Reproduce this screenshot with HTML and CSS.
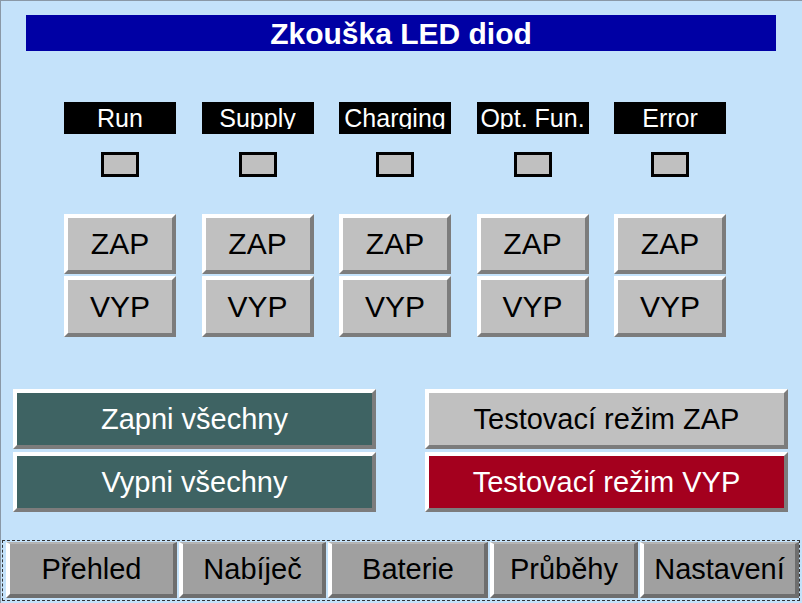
FILE: index.html
```html
<!DOCTYPE html>
<html lang="cs">
<head>
<meta charset="utf-8">
<title>Zkouška LED diod</title>
<link rel="stylesheet" href="styles.css">
</head>
<body>
<div class="screen">
  <div class="title">Zkouška LED diod</div>

  <div class="grid labels">
    <div class="label"><span>Run</span></div>
    <div class="label"><span>Supply</span></div>
    <div class="label"><span>Charging</span></div>
    <div class="label"><span>Opt. Fun.</span></div>
    <div class="label"><span>Error</span></div>
  </div>

  <div class="grid leds">
    <div class="led-cell"><div class="led"></div></div>
    <div class="led-cell"><div class="led"></div></div>
    <div class="led-cell"><div class="led"></div></div>
    <div class="led-cell"><div class="led"></div></div>
    <div class="led-cell"><div class="led"></div></div>
  </div>

  <div class="grid switches">
    <div class="pair"><div class="btn">ZAP</div><div class="btn">VYP</div></div>
    <div class="pair"><div class="btn">ZAP</div><div class="btn">VYP</div></div>
    <div class="pair"><div class="btn">ZAP</div><div class="btn">VYP</div></div>
    <div class="pair"><div class="btn">ZAP</div><div class="btn">VYP</div></div>
    <div class="pair"><div class="btn">ZAP</div><div class="btn">VYP</div></div>
  </div>

  <div class="big-row">
    <div class="big-col">
      <div class="btn big teal">Zapni všechny</div>
      <div class="btn big teal">Vypni všechny</div>
    </div>
    <div class="big-col">
      <div class="btn big">Testovací režim ZAP</div>
      <div class="btn big red">Testovací režim VYP</div>
    </div>
  </div>

  <div class="nav">
    <div class="nav-btn w1">Přehled</div>
    <div class="nav-btn w2">Nabíječ</div>
    <div class="nav-btn w3">Baterie</div>
    <div class="nav-btn w4">Průběhy</div>
    <div class="nav-btn w5">Nastavení</div>
  </div>
</div>
</body>
</html>
```

FILE: styles.css
```css
* { box-sizing: border-box; }
html, body {
  margin: 0;
  padding: 0;
  background: #c4e2fa;
}
.screen {
  width: 802px;
  height: 603px;
  overflow: hidden;
  background: #c4e2fa;
  border-top: 1px solid #8a98a6;
  border-left: 1px solid #8a98a6;
  font-family: "Liberation Sans", Arial, sans-serif;
  padding-top: 14px;
}
.title {
  margin-left: 25px;
  width: 750px;
  height: 36px;
  background: #0000a4;
  color: #fff;
  font-weight: bold;
  font-size: 30px;
  line-height: 37px;
  text-align: center;
}
.grid {
  display: grid;
  grid-template-columns: repeat(5, 112px);
  column-gap: 25.5px;
  margin-left: 63px;
}
.labels { margin-top: 51px; }
.label {
  height: 32px;
  background: #000;
  color: #fff;
  font-size: 25px;
  display: flex;
  justify-content: center;
  padding-top: 4px;
}
.label span {
  display: block;
  height: 23px;
  line-height: 25px;
  overflow: hidden;
  white-space: nowrap;
}
.leds { margin-top: 18px; }
.led-cell {
  display: flex;
  justify-content: center;
}
.led {
  width: 38px;
  height: 25px;
  border: 3px solid #000;
  background: #c0c0c0;
}
.switches { margin-top: 37px; }
.pair {
  display: flex;
  flex-direction: column;
  gap: 2px;
}
.btn {
  height: 60px;
  background: #c0c0c0;
  border: 4px solid;
  border-color: #ffffff #7c7c7c #7c7c7c #ffffff;
  color: #000;
  font-size: 29px;
  display: flex;
  align-items: center;
  justify-content: center;
  white-space: nowrap;
}
.pair .btn { font-size: 30px; }
.pair .btn:last-child { height: 61px; }
.big-row {
  margin-top: 52px;
  margin-left: 12px;
  display: flex;
  gap: 49px;
}
.big-col {
  width: 363px;
  display: flex;
  flex-direction: column;
  gap: 3px;
}
.big { height: 60px; }
.teal {
  background: #3e6363;
  color: #fff;
}
.red {
  background: #a4001e;
  color: #fff;
}
.nav {
  margin-top: 28px;
  margin-left: 1px;
  width: 798px;
  height: 61px;
  border: 1px dashed #333;
  padding: 1px 0 0 3px;
  display: flex;
  gap: 2px;
}
.nav-btn {
  height: 56px;
  background: #a0a0a0;
  border: 4px solid;
  border-color: #b4b4b4 #6e6e6e #6e6e6e #ffffff;
  border-top-width: 2px;
  color: #000;
  font-size: 29px;
  display: flex;
  align-items: center;
  justify-content: center;
  white-space: nowrap;
}
.w1 { width: 171px; }
.w2 { width: 147px; }
.w3 { width: 160px; }
.w4 { width: 148px; }
.w5 { width: 159px; }
```
